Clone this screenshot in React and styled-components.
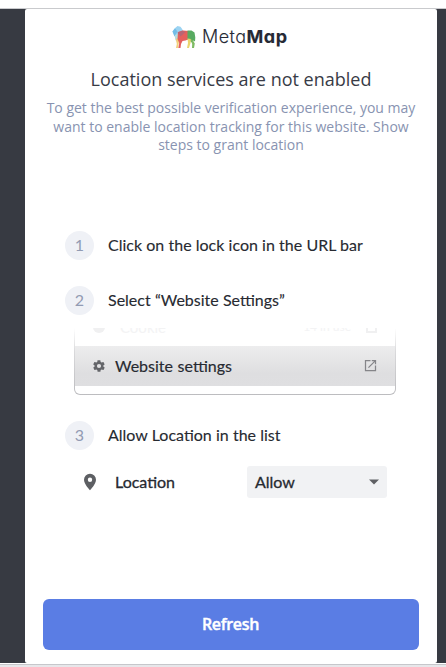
import React from "react";
import styled, { createGlobalStyle } from "styled-components";

const GlobalStyle = createGlobalStyle`
  * { box-sizing: border-box; }
  body { margin: 0; background: #fff; }
  h1, p, ol { margin: 0; padding: 0; }
  svg { display: block; flex: none; }
`;

const Page = styled.div`
  height: 667px;
  width: 446px;
  display: flex;
  flex-direction: column;
  overflow: hidden;
  background: #fff;
`;

const TopStrip = styled.div`
  height: 9px;
  flex: none;
  border-bottom: 1px solid #c9cacd;
`;

const Backdrop = styled.div`
  height: 654px;
  flex: none;
  background: #373a42;
  padding: 0 9px 0 25px;
`;

const BottomStrip = styled.div`
  height: 3px;
  margin-top: 1px;
  background: #e7e7ea;
  border-top: 1px solid #c6c7cb;
`;

const Panel = styled.main`
  height: 100%;
  background: #fff;
  border-radius: 2px;
  padding: 15px 18px 13px;
  display: flex;
  flex-direction: column;
`;

const Brand = styled.div`
  height: 26px;
  display: flex;
  align-items: center;
  padding-left: 129px;
  gap: 6px;
`;

const Wordmark = styled.div`
  font: 300 18px/26px Inter, sans-serif;
  font-feature-settings: "cv11";
  letter-spacing: 0.45px;
  color: #262a35;
  white-space: nowrap;
  -webkit-text-stroke: 0.1px currentColor;
  b { font-weight: 700; letter-spacing: 0.6px; }
`;

const Title = styled.h1`
  margin-top: 17px;
  font: 400 18px/24px "Open Sans", sans-serif;
  color: #383b46;
  text-align: center;
  white-space: nowrap;
`;

const Intro = styled.p`
  margin-top: 8px;
  font: 400 14px/18.5px "Open Sans", sans-serif;
  color: #8893b1;
  text-align: center;
  white-space: nowrap;
`;

const Steps = styled.ol`
  list-style: none;
  margin-top: 76px;
  padding: 0 22px;
`;

const Step = styled.li`
  height: 30px;
  margin-top: ${(p) => p.$gap || 0}px;
  display: flex;
  align-items: center;
  gap: 14px;
`;

const StepNumber = styled.span`
  width: 29px;
  height: 29px;
  border-radius: 50%;
  background: #eff1f6;
  color: #929bb3;
  font: 400 16px/28px Lato, sans-serif;
  text-align: center;
`;

const Label = styled.span`
  font: 400 16px/22px Lato, sans-serif;
  letter-spacing: 0;
  font-variant-ligatures: common-ligatures;
  color: #272a31;
  white-space: nowrap;
  -webkit-text-stroke: ${(p) => p.$stroke || 0.12}px currentColor;
`;

const StepLabel = styled(Label)`
  padding-bottom: 1px;
  word-spacing: 0.1px;
`;

const MenuCard = styled.div`
  width: 322px;
  height: 67px;
  margin: 12px 0 0 9px;
  padding: 0 1px 1px;
  border-radius: 0 0 6px 6px;
  background: linear-gradient(#fff, #d9d9db 35%, #bcbcbf);
`;

const MenuBody = styled.div`
  height: 66px;
  overflow: hidden;
  border-radius: 0 0 5px 5px;
  background: #fff;
`;

const CutOffRow = styled.div`
  height: 18px;
  overflow: hidden;
  padding: 0 18px;
  color: #e9e9eb;
  font: 400 16px/18px Lato, sans-serif;
`;

const CutOffClip = styled.div`
  height: 5px;
  width: 100%;
  display: flex;
  align-items: flex-end;
  overflow: hidden;
  opacity: 0.5;
`;

const CutOffDot = styled.i`
  width: 12px;
  height: 12px;
  border-radius: 50%;
  background: #e2e2e4;
`;

const CutOffText = styled.span`
  margin-left: ${(p) => p.$left};
  margin-right: ${(p) => p.$right || 0};
  font-size: ${(p) => p.$size}px;
  line-height: 12px;
`;

const CutOffIcon = styled.i`
  width: 11px;
  height: 11px;
  border: 2px solid #e2e2e4;
`;

const MenuRow = styled.div`
  height: 40px;
  display: flex;
  align-items: center;
  padding: 0 17px 0 17px;
  background: linear-gradient(#ededee, #dedee0 70%, #dfdfe1);
`;

const MenuLabel = styled(Label)`
  margin-left: 9px;
  word-spacing: 0.5px;
  flex: 1;
`;

const PermissionRow = styled.div`
  height: 32px;
  margin-top: 15px;
  padding-left: 18px;
  display: flex;
  align-items: center;
`;

const PermissionName = styled(Label)`
  width: 132px;
  margin-left: 18px;
`;

const Select = styled.div`
  width: 140px;
  height: 32px;
  padding: 0 8px;
  border-radius: 3px;
  background: #f1f2f4;
  display: flex;
  align-items: center;
  justify-content: space-between;
`;

const RefreshButton = styled.button`
  height: 51px;
  width: 376px;
  margin-top: auto;
  padding: 0 1px 2px 0;
  border: 0;
  border-radius: 6px;
  background: #5a7de4;
  color: #fff;
  font: 600 16px/22px "Open Sans", sans-serif;
  letter-spacing: -0.3px;
  -webkit-text-stroke: 0.4px currentColor;
`;

function WolfLogo() {
  return (
    <svg width="24" height="24" viewBox="0 0 24 24">
      <path d="M.5 6.500 2.500 3.500 5.500 1 8.500 1.800l2 2.700-.5 4-3 4-3 3-1.200-4z" fill="#9bd3f2" />
      <path d="m.5 6.500 2.500-3 2.500 3-3 5z" fill="#73bde6" />
      <path d="m3 10 3-1 2 6-3 2-1.500-2z" fill="#b9dcd8" />
      <path d="m3.800 13.500 3 .5v4l-1 5H4l.8-4z" fill="#f3cf79" />
      <path d="m6 7 5-1.500 6 .5.500 8-4 1.500-3 .5-1.500 3-.500 4H6.300l.9-5L5.500 14z" fill="#e4605d" />
      <path d="m5.500 7.500 5-2 3 1.500-5 4.500z" fill="#b96574" />
      <path d="m15.500 5.500 4 0 3 2 .8 5-.3 4-1.500-1-1.500 2-4.500-3z" fill="#58aa61" />
      <path d="m15.500 13.500 3.500.5-.5 4-1.500 5h-2l1-5z" fill="#ead56e" />
      <path d="m18.500 14 2.500 1.500 1.800 3L22 23h-2l.2-4z" fill="#7fbb63" />
    </svg>
  );
}

function GearIcon() {
  return (
    <svg width="14" height="14" viewBox="0 0 24 24" fill="#646569">
      <path d="M19.4 13c.04-.3.06-.6.06-1s-.02-.7-.06-1l2.1-1.6c.2-.15.24-.4.1-.6l-2-3.5c-.1-.2-.35-.3-.6-.2l-2.5 1a8 8 0 0 0-1.7-1L14.400 2.400a.5.5 0 0 0-.5-.4h-4c-.25 0-.45.2-.5.4L9 5.100a8 8 0 0 0-1.700 1l-2.500-1c-.25-.1-.5 0-.6.2l-2 3.500c-.1.2-.05.450.1.600L4.500 11a8 8 0 0 0 0 2l-2.100 1.600c-.2.150-.25.400-.1.600l2 3.500c.1.200.350.300.600.200l2.500-1a8 8 0 0 0 1.700 1l.4 2.700c.05.200.250.400.500.400h4c.25 0 .450-.200.500-.400l.4-2.700a8 8 0 0 0 1.700-1l2.500 1c.25.100.500 0 .600-.200l2-3.500c.1-.200.050-.450-.100-.600zM12 15.600a3.600 3.600 0 1 1 0-7.200 3.600 3.600 0 0 1 0 7.200z" />
    </svg>
  );
}

function ExternalIcon() {
  return (
    <svg width="15" height="15" viewBox="0 0 24 24" fill="#858589">
      <path d="M19 19H5V5h7V3H3v18h18v-9h-2zM14 3v2h3.600L8 14.600 9.400 16 19 6.400V10h2V3z" />
    </svg>
  );
}

function PinIcon() {
  return (
    <svg width="14" height="18" viewBox="0 0 14 18">
      <path
        d="M7 .8A6 6 0 0 0 1 6.800c0 4.400 6 10.500 6 10.500s6-6.100 6-10.500a6 6 0 0 0-6-6zm0 8.100a2.200 2.200 0 1 1 0-4.400 2.200 2.200 0 0 1 0 4.400z"
        fill="#5d5f63"
      />
    </svg>
  );
}

function Caret() {
  return (
    <svg width="10" height="6" viewBox="0 0 10 6">
      <path d="M0 .5h10l-5 5z" fill="#5f6064" />
    </svg>
  );
}

export default function App() {
  return (
    <Page>
      <GlobalStyle />
      <TopStrip />
      <Backdrop>
        <Panel>
          <Brand>
            <WolfLogo />
            <Wordmark>Meta<b>Map</b></Wordmark>
          </Brand>
          <Title>Location services are not enabled</Title>
          <Intro>
            To get the best possible verification experience, you may<br />
            want to enable location tracking for this website. Show<br />
            steps to grant location
          </Intro>
          <Steps>
            <Step>
              <StepNumber>1</StepNumber>
              <StepLabel>Click on the lock icon in the URL bar</StepLabel>
            </Step>
            <Step $gap={25}>
              <StepNumber>2</StepNumber>
              <StepLabel>Select “Website Settings”</StepLabel>
            </Step>
            <MenuCard>
              <MenuBody>
                <CutOffRow>
                  <CutOffClip>
                    <CutOffDot />
                    <CutOffText $left="15px" $right="auto" $size={15}>Cookie</CutOffText>
                    <CutOffText $left="0" $right="15px" $size={12}>14 in use</CutOffText>
                    <CutOffIcon />
                  </CutOffClip>
                </CutOffRow>
                <MenuRow>
                  <GearIcon />
                  <MenuLabel $stroke={0.15}>Website settings</MenuLabel>
                  <ExternalIcon />
                </MenuRow>
              </MenuBody>
            </MenuCard>
            <Step $gap={26}>
              <StepNumber>3</StepNumber>
              <StepLabel>Allow Location in the list</StepLabel>
            </Step>
            <PermissionRow>
              <PinIcon />
              <PermissionName $stroke={0.3}>Location</PermissionName>
              <Select>
                <Label $stroke={0.3}>Allow</Label>
                <Caret />
              </Select>
            </PermissionRow>
          </Steps>
          <RefreshButton>Refresh</RefreshButton>
        </Panel>
      </Backdrop>
      <BottomStrip />
    </Page>
  );
}
